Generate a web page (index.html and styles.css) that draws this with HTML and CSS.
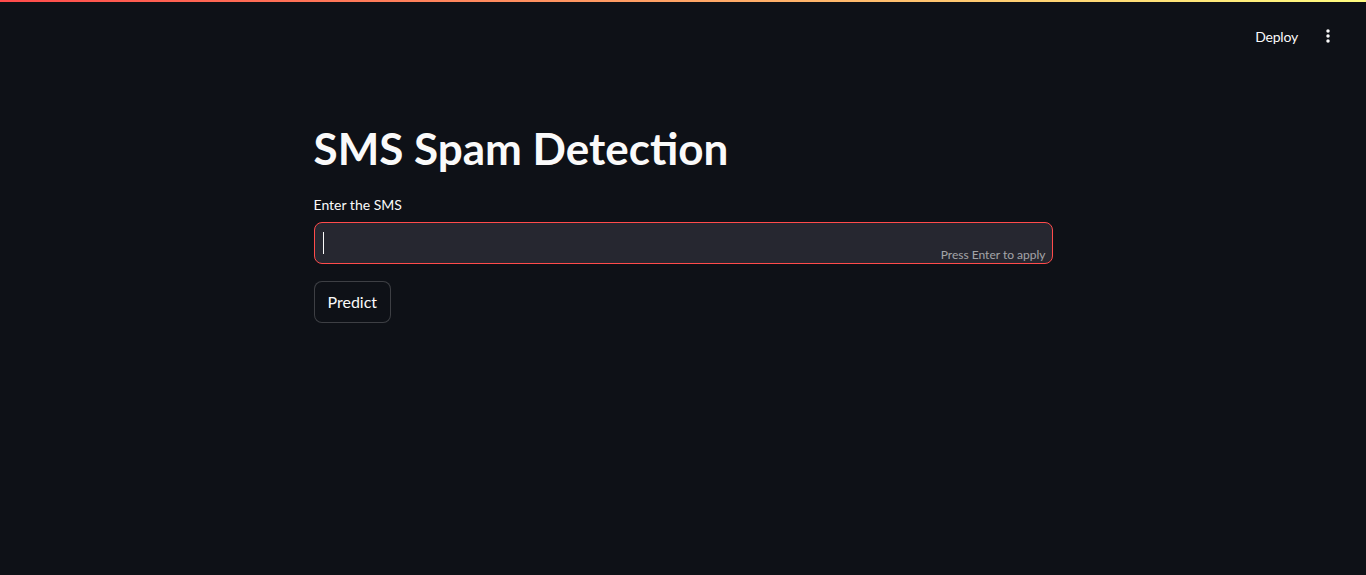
FILE: index.html
```html
<!DOCTYPE html>
<html lang="en">
<head>
<meta charset="utf-8">
<title>SMS Spam Detection</title>
<link rel="stylesheet" href="styles.css">
</head>
<body>
<div class="decoration"></div>
<header class="header">
  <button class="deploy">Deploy</button>
  <button class="menu" aria-label="Main menu">
    <svg width="16" height="16" viewBox="0 0 24 24" fill="#fafafa"><circle cx="12" cy="4.5" r="2.6"/><circle cx="12" cy="12" r="2.6"/><circle cx="12" cy="19.5" r="2.6"/></svg>
  </button>
</header>
<main class="main">
  <div class="block">
    <h1 class="title">SMS Spam Detection</h1>
    <div class="field">
      <label class="label">Enter the SMS</label>
      <div class="input">
        <span class="caret"></span>
        <span class="hint">Press Enter to apply</span>
      </div>
    </div>
    <button class="btn">Predict</button>
  </div>
</main>
</body>
</html>
```
FILE: styles.css
```css
* { box-sizing: border-box; }
html, body { margin: 0; padding: 0; }
body {
  background: #0e1117;
  color: #fafafa;
  font-family: "Lato", "Liberation Sans", sans-serif;
  height: 575px;
  overflow: hidden;
}
.decoration {
  height: 2px;
  background: linear-gradient(90deg, #ff4b4b, #fffd80);
}
.header {
  height: 58px;
  display: flex;
  align-items: center;
  justify-content: flex-end;
  padding-right: 30px;
  padding-top: 10px;
  gap: 14px;
}
.deploy {
  background: transparent;
  border: none;
  color: #fafafa;
  font-family: inherit;
  font-size: 14px;
  letter-spacing: -0.2px;
  padding: 6px 8px;
}
.menu {
  background: transparent;
  border: none;
  padding: 0;
  display: flex;
}
.main {
  display: flex;
  justify-content: center;
}
.block {
  width: 739px;
  padding-top: 60px;
}
.title {
  margin: 0;
  font-size: 44px;
  font-weight: 700;
  line-height: 1.2;
  padding: 2px 0 20px;
}
.field { display: flex; flex-direction: column; }
.label {
  font-size: 14px;
  line-height: 20px;
  margin-bottom: 7px;
}
.input {
  position: relative;
  height: 42px;
  background: #262730;
  border: 1px solid #ff4b4b;
  border-radius: 8px;
}
.caret {
  position: absolute;
  left: 8px;
  top: 9px;
  width: 1px;
  height: 22px;
  background: #fafafa;
}
.hint {
  position: absolute;
  right: 6px;
  bottom: 1px;
  font-size: 12px;
  color: rgba(250, 250, 250, 0.6);
}
.btn {
  margin-top: 17px;
  height: 42px;
  padding: 0 13px;
  background: #0e1117;
  color: #fafafa;
  border: 1px solid rgba(250, 250, 250, 0.2);
  border-radius: 8px;
  font-family: inherit;
  font-size: 16px;
}
```
